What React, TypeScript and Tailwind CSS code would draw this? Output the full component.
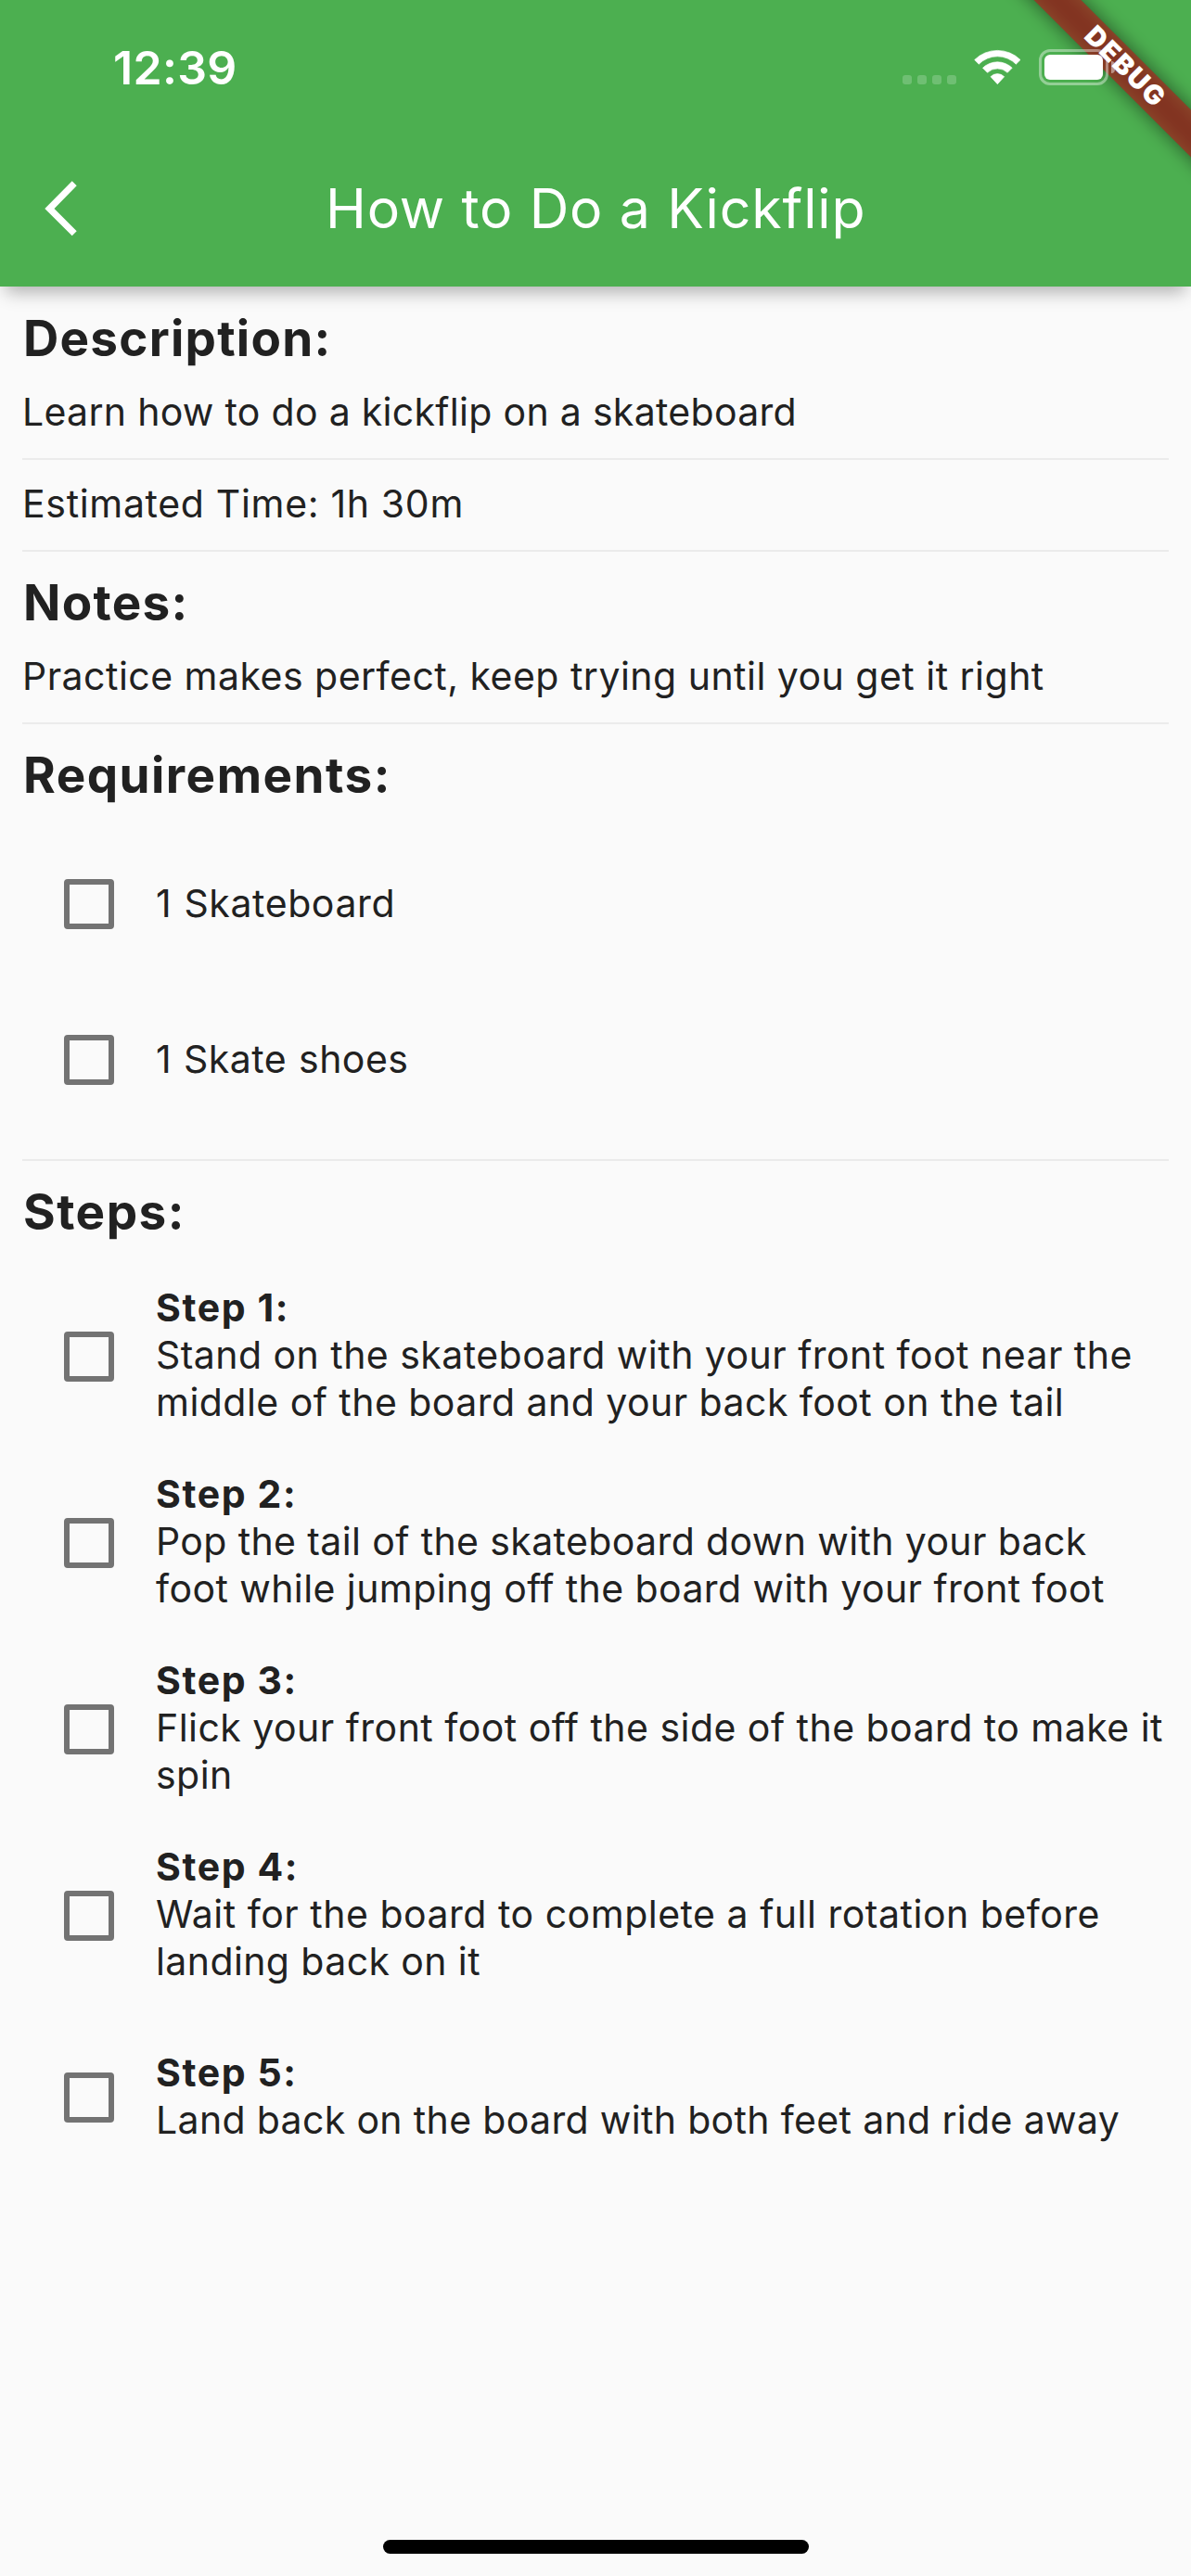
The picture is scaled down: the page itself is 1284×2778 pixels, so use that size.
import type { ReactNode } from "react";

type Line = { text: string; spacing: string };

const requirements: Line[] = [
  { text: "1 Skateboard", spacing: "tracking-[0.6px] [word-spacing:1px]" },
  { text: "1 Skate shoes", spacing: "tracking-[0.45px] [word-spacing:1px]" },
];

const steps: { height: string; lines: Line[] }[] = [
  {
    height: "h-[201px]",
    lines: [
      { text: "Stand on the skateboard with your front foot near the", spacing: "tracking-[0.46px]" },
      { text: "middle of the board and your back foot on the tail", spacing: "tracking-[0.46px]" },
    ],
  },
  {
    height: "h-[201px]",
    lines: [
      { text: "Pop the tail of the skateboard down with your back", spacing: "tracking-[0.38px]" },
      { text: "foot while jumping off the board with your front foot", spacing: "tracking-[0.42px]" },
    ],
  },
  {
    height: "h-[201px]",
    lines: [
      { text: "Flick your front foot off the side of the board to make it", spacing: "tracking-[0.47px]" },
      { text: "spin", spacing: "tracking-[0.48px]" },
    ],
  },
  {
    height: "h-[201px]",
    lines: [
      { text: "Wait for the board to complete a full rotation before", spacing: "tracking-[0.51px]" },
      { text: "landing back on it", spacing: "tracking-[0.4px]" },
    ],
  },
  {
    height: "h-[192px]",
    lines: [{ text: "Land back on the board with both feet and ride away", spacing: "tracking-[0.34px]" }],
  },
];

function StatusBar() {
  return (
    <div className="relative z-20 flex h-[141px] items-start pt-[53px] pl-[122px]">
      <time className="-mt-[10px] w-[200px] text-[50px] leading-[60px] font-semibold tracking-[0.3px]">12:39</time>
      <div className="ml-[651px] flex items-start">
        <div className="mt-[28px] flex gap-[6px]">
          {[0, 1, 2, 3].map((dot) => (
            <span key={dot} className="size-[10px] rounded-[3px] bg-white/20" />
          ))}
        </div>
        <svg className="ml-[19px] h-[39px] w-[51px]" viewBox="318 159 153 117" fill="white" stroke="white" strokeWidth="2" strokeLinejoin="round">
          <path d="M320 193.500A105.500 105.500 0 0 1 468 193.500L454.100 207.400A85 85 0 0 0 333.900 207.400Z" />
          <path d="M346.500 219.900A68 68 0 0 1 441.500 219.900L426.500 234.900A47 47 0 0 0 361.500 234.900Z" />
          <path d="M372 248A31 31 0 0 1 416 248L394 272Z" />
        </svg>
        <div className="ml-[19px] h-[39px] w-[75px] rounded-[12px] border-[3px] border-white/40 p-[3px]">
          <div className="h-[27px] w-[63px] rounded-[6px] bg-white" />
        </div>
        <span className="mt-[13px] ml-[3px] h-[13px] w-[4px] rounded-r-[4px] bg-white/45" />
      </div>
    </div>
  );
}

function DebugBanner() {
  return (
    <div className="pointer-events-none absolute top-0 right-0 z-10 size-[309px] overflow-hidden">
      <div className="absolute top-[54px] left-[37px] h-[36px] w-[400px] rotate-45 bg-black/50 blur-[10px]" />
      <div className="absolute top-[54px] left-[37px] flex h-[36px] w-[400px] rotate-45 items-center justify-center bg-[#b71c1c]/63 pb-[2px] pl-[2px] text-[29px] leading-[34px] font-black tracking-[1.8px]">
        DEBUG
      </div>
    </div>
  );
}

function Heading({ children, spacing }: { children: ReactNode; spacing: string }) {
  return (
    <h2 className={`mt-[22px] h-[65px] pt-px pl-px text-[53px] leading-[65px] font-bold whitespace-nowrap ${spacing}`}>
      {children}
    </h2>
  );
}

function Body({ children, spacing }: { children: ReactNode; spacing: string }) {
  return <p className={`mt-[22px] h-[51px] whitespace-nowrap ${spacing}`}>{children}</p>;
}

function Rule({ margin = "mt-[24px]" }: { margin?: string }) {
  return <hr className={`h-[2px] border-0 bg-[#ebebeb] ${margin}`} />;
}

function CheckRow({ height, children }: { height: string; children: ReactNode }) {
  return (
    <li className={`flex items-center gap-[45px] pl-[45px] ${height}`}>
      <span role="checkbox" aria-checked="false" className="size-[54px] shrink-0 rounded-[4px] border-[6px] border-[#737373]" />
      <div className="relative -top-px whitespace-nowrap">{children}</div>
    </li>
  );
}

export default function App() {
  return (
    <div className="relative flex h-[2778px] w-[1284px] flex-col overflow-hidden bg-[#fafafa] font-['Inter',sans-serif] text-[41px] leading-[51px] text-[#212121]">
      <header className="relative h-[309px] shrink-0 bg-[#4caf50] text-white shadow-[0_12px_18px_-6px_rgba(0,0,0,0.3)]">
        <StatusBar />
        <div className="flex h-[168px] items-center">
          <svg className="ml-[48px] h-[60px] w-[36px]" viewBox="48 195 36 60" fill="white">
            <path d="M77.700 195.300L82.700 200.300L58.500 225L82.700 249.300L77.700 254.300L48.300 225Z" />
          </svg>
          <h1 className="ml-[267px] text-[59px] leading-[72px] tracking-[0.85px] whitespace-nowrap">How to Do a Kickflip</h1>
        </div>
        <DebugBanner />
      </header>

      <main className="flex flex-col px-[24px] pt-px">
        <Heading spacing="tracking-[1.25px]">Description:</Heading>
        <Body spacing="tracking-[0.30px]">Learn how to do a kickflip on a skateboard</Body>
        <Rule />
        <Body spacing="tracking-[0.67px]">Estimated Time: 1h 30m</Body>
        <Rule />
        <Heading spacing="tracking-[1.3px]">Notes:</Heading>
        <Body spacing="tracking-[0.48px]">Practice makes perfect, keep trying until you get it right</Body>
        <Rule />
        <Heading spacing="tracking-[1.47px]">Requirements:</Heading>
        <ul className="mt-[23px]">
          {requirements.map((item) => (
            <CheckRow key={item.text} height="h-[168px]">
              <p className={item.spacing}>{item.text}</p>
            </CheckRow>
          ))}
        </ul>
        <Rule margin="mt-[23px]" />
        <Heading spacing="tracking-[1.5px]">Steps:</Heading>
        <ul className="mt-[23px]">
          {steps.map((step, index) => (
            <CheckRow key={index} height={step.height}>
              <p className="font-bold tracking-[1.6px]">Step {index + 1}:</p>
              {step.lines.map((line) => (
                <p key={line.text} className={line.spacing}>
                  {line.text}
                </p>
              ))}
            </CheckRow>
          ))}
        </ul>
      </main>

      <div className="mt-auto mb-[24px] h-[15px] w-[459px] self-center rounded-full bg-black" />
    </div>
  );
}
